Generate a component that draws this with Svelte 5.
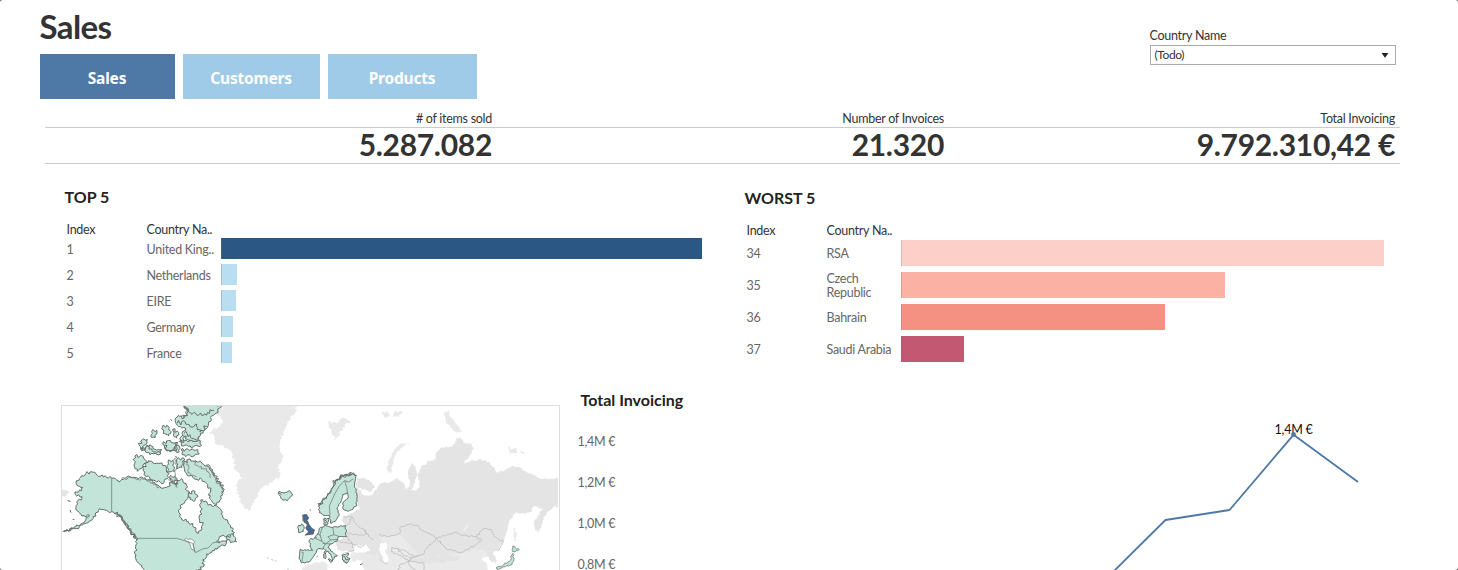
<script>
  const tabs = [
    { name: 'Sales', width: 135, active: true },
    { name: 'Customers', width: 137, active: false },
    { name: 'Products', width: 149, active: false }
  ];

  const kpis = [
    { label: '# of items sold', value: '5.287.082' },
    { label: 'Number of Invoices', value: '21.320' },
    { label: 'Total Invoicing', value: '9.792.310,42 €' }
  ];

  const rankings = [
    {
      title: 'TOP 5',
      kind: 'top',
      rows: [
        { index: 1, name: 'United King..', width: 481, color: '#2a5783' },
        { index: 2, name: 'Netherlands', width: 16.5, color: '#b9ddf1' },
        { index: 3, name: 'EIRE', width: 15.5, color: '#b9ddf1' },
        { index: 4, name: 'Germany', width: 12.5, color: '#b9ddf1' },
        { index: 5, name: 'France', width: 11.5, color: '#b9ddf1' }
      ]
    },
    {
      title: 'WORST 5',
      kind: 'worst',
      rows: [
        { index: 34, name: 'RSA', width: 483, color: '#fcd0c8' },
        { index: 35, name: 'Czech Republic', width: 324, color: '#fbb1a3' },
        { index: 36, name: 'Bahrain', width: 264, color: '#f59182' },
        { index: 37, name: 'Saudi Arabia', width: 63, color: '#c35873' }
      ]
    }
  ];

  const ticks = ['1,4M €', '1,2M €', '1,0M €', '0,8M €'];

  // Subdivides each edge with a small deterministic offset so coasts look ragged.
  function coast(text, amp = 4, closed = true, seed = 7) {
    const n = text.trim().split(/\s+/).map(Number);
    const pts = [];
    for (let i = 0; i < n.length; i += 2) pts.push([n[i], n[i + 1]]);
    let s = seed;
    const rnd = () => ((s = (s * 16807) % 2147483647) / 2147483647) * 2 - 1;
    const out = [];
    const last = closed ? pts.length : pts.length - 1;
    for (let i = 0; i < last; i++) {
      const [ax, ay] = pts[i];
      const [bx, by] = pts[(i + 1) % pts.length];
      const len = Math.hypot(bx - ax, by - ay);
      const steps = Math.max(2, Math.round(len / 5));
      out.push([ax, ay]);
      for (let k = 1; k < steps; k++) {
        const t = k / steps;
        const d = rnd() * amp;
        out.push([ax + (bx - ax) * t - ((by - ay) / len) * d, ay + (by - ay) * t + ((bx - ax) / len) * d]);
      }
    }
    if (!closed) out.push(pts[pts.length - 1]);
    return 'M' + out.map((p) => p.map((v) => v.toFixed(1)).join(' ')).join('L') + (closed ? 'Z' : '');
  }

  const america = [
    '90 216 78 220 62 232 48 248 55 258 68 262 64 272 45 276 50 288 66 290 64 300 50 306 48 322 60 340 72 347 88 345 78 358 60 374 40 385 12 394 45 386 85 368 100 355 108 338 118 326 135 330 155 335 170 342 185 355 200 375 215 398 228 415 227 440 228 465 236 490 250 515 415 515 432 492 428 480 440 462 455 458 465 446 480 440 498 432 500 420 480 428 470 424 485 408 505 404 519 402 518 384 505 370 492 355 482 328 470 318 455 318 440 305 422 300 420 318 426 342 418 356 428 375 425 390 415 400 408 384 398 370 380 364 364 354 357 338 360 318 375 304 392 290 380 272 378 250 364 236 352 240 348 255 335 248 320 262 298 258 285 248 262 240 250 235 235 236 220 232 205 228 190 238 178 246 155 235 130 231 108 222',
    '372 190 385 178 402 184 420 183 440 198 455 212 465 232 480 250 493 268 488 285 480 300 470 314 455 302 445 285 452 270 440 250 425 238 402 236 380 222 373 205',
    '385 285 400 272 414 290 402 305 390 298',
    '250 206 265 182 290 190 305 188 320 205 325 232 312 248 290 246 270 238 252 222',
    '225 168 250 170 260 184 245 205 232 214 222 195',
    '238 136 246 120 262 118 258 134 242 148', '245 152 270 134 285 148 305 148 302 162 280 162 262 158',
    '275 95 290 90 286 112 274 112', '307 82 320 76 333 95 326 108 310 100', '338 88 356 98 350 114 340 106',
    '308 132 325 122 345 130 350 150 330 156 314 146', '363 150 412 148 418 162 402 168 368 165',
    '358 125 420 120 425 136 400 140 370 138', '346 128 356 136 358 156 350 158',
    '366 14 482 14 474 38 460 46 446 72 430 94 415 118 400 124 382 118 366 100 376 84 352 76 345 60 355 46 372 54 385 30',
    '350 178 372 175 366 202 350 206', '324 186 338 180 344 214 322 218', '500 414 520 402 530 425 512 428',
    '328 232 344 228 350 242 334 246', '362 112 374 110 372 122 362 120'
  ];

  const europe = [
    '357 320 366 304 380 290 395 266 405 246 430 226 450 218 469 226 466 240 464 252 470 280 470 318 445 334 430 328 428 312 445 290 442 278 428 284 424 302 412 322 418 345 406 364 393 371 388 346 372 346 358 338',
    '235 282 240 274 252 280 268 272 279 284 262 302 246 298',
    '293 382 305 372 312 380 310 394 296 398',
    '328 420 344 414 354 402 358 385 376 376 398 382 437 377 439 410 414 412 410 424 390 432 384 442 400 458 412 466 404 470 398 480 392 462 372 446 352 448 345 462 328 486 305 489 297 476 300 449 338 451 330 438',
    '370 358 385 354 384 372 373 376', '426 466 446 460 440 470 450 476 440 490 428 480',
    '372 456 378 458 376 476 371 474', '384 478 398 480 394 487'
  ];

  const grayWest = [
    '50 14 290 14 285 40 262 66 250 100 238 140 250 172 235 200 240 228 200 256 178 276 160 300 151 334 130 320 115 290 108 254 125 232 106 210 100 175 84 146 60 136 42 128 45 110 28 97 55 80 68 60 55 42',
    '385 66 410 70 428 50 454 64 434 75 428 92 414 108 406 128 396 100',
    '298 518 316 496 350 486 380 486 384 518', '452 464 480 460 520 462 540 470 540 518 495 518 490 482 455 482'
  ];

  const eurasia = [
    '-70 235 -45 235 -25 246 -14 262 -30 276 -48 268 -66 262 -50 285 -28 286 -8 264 6 248 28 248 46 235 70 248 80 268 90 258 84 214 95 190 106 198 112 222 104 250 94 270 108 273 119 254 114 220 124 200 142 190 142 182 165 178 166 164 188 142 215 140 230 122 228 114 242 114 250 126 270 130 280 142 276 158 258 180 248 188 285 182 302 178 330 186 352 218 375 210 395 198 425 205 450 220 480 235 505 238 545 232 545 325 520 320 500 336 488 362 478 396 464 390 464 360 490 326 462 318 452 336 405 340 386 372 372 426 352 452 338 462 352 480 347 492 332 482 322 468 304 477 320 490 326 518 -40 518 -60 476 -90 452 -128 450 -136 422 -100 410 -104 376 -116 360 -96 345 -62 330 -70 300'
  ];
  const islands = [
    '192 42 204 30 210 50 222 62 238 82 246 94 228 98 214 84 198 68', '90 128 70 138 48 162 38 192 34 220 20 214 24 184 42 150 64 130',
    '384 142 396 148 410 144 412 158 390 162', '420 155 436 156 430 162', '402 382 410 402 404 436 401 412',
    '4 40 20 34 30 48 16 54', '44 36 72 34 54 50 36 50'
  ];
  const borders = [
    '-4 405 25 410 60 400 60 382 90 372 110 375 125 390 150 400 170 415 145 440 125 465 100 468 80 455 50 445 35 442 34 456',
    '170 415 200 405 228 396 248 406 290 410 306 422 280 440 240 458 200 447 170 415',
    '290 410 310 385 334 388 345 412 370 425 362 444 352 452',
    '34 456 60 466 84 480 108 486 132 490 134 512', '50 445 68 464 96 474 118 466',
    '56 512 60 494 84 486 98 468', '84 480 90 500 110 512',
    '-112 352 -84 350 -72 372 -48 390 -38 402 -60 406 -100 400', '-84 350 -94 372 -102 378',
    '-100 410 -84 430 -56 442 -44 430', '-128 424 -106 428 -84 430 -78 452 -106 458', '-48 390 -30 412 -20 420',
    '-50 470 -30 474 -18 466 0 480 22 492', '-30 474 -24 494 -40 514'
  ];
</script>

<main>
  <header>
    <div class="heading">
      <h1>Sales</h1>
      <nav>
        {#each tabs as tab}
          <button class:active={tab.active} style:width="{tab.width}px">{tab.name}</button>
        {/each}
      </nav>
    </div>
    <div class="filter">
      <span class="filter-label">Country Name</span>
      <div class="select">
        <span>(Todo)</span>
        <svg width="8" height="5" viewBox="0 0 8 5"><path d="M.5 0h7L4 4.8z" fill="#222" /></svg>
      </div>
    </div>
  </header>

  <section class="kpis">
    {#each kpis as kpi}
      <div class="kpi">
        <div class="kpi-label">{kpi.label}</div>
        <div class="kpi-value">{kpi.value}</div>
      </div>
    {/each}
  </section>

  <section class="rankings">
    {#each rankings as rank}
      <div class="ranking {rank.kind}">
        <h2>{rank.title}</h2>
        <div class="row head"><span>Index</span><span>Country Na..</span></div>
        {#each rank.rows as row}
          <div class="row">
            <span class="index">{row.index}</span>
            <span class="name">{row.name}</span>
            <div class="bar" style:width="{row.width}px" style:background={row.color}></div>
          </div>
        {/each}
      </div>
    {/each}
  </section>

  <section class="bottom">
    <div class="map">
      <svg width="496" height="164" viewBox="62 406 496 164">
        <g transform="translate(380 400) scale(.33333)">
          {#each eurasia as d}<path d={coast(d, 3)} fill="#e4e4e4" />{/each}
          <path d={coast('0 408 26 412 60 402 120 468 160 470 210 462 250 460 290 446 320 455 318 470 304 477 320 490 326 518 -40 518 10 480', 3)} fill="#eaeaea" />
          <path d={coast('60 478 110 474 150 470 210 464 245 468 230 482 180 488 130 492', 4)} fill="#e4e4e4" />
          {#each islands as d}<path d={coast(d, 3)} fill="#e9e9e9" />{/each}
          <path d={coast('0 432 18 428 22 442 14 452 24 468 26 484 12 486 6 466 -4 448', 2)} fill="#fff" />
          <path d={coast('-84 448 -70 434 -56 438 -44 430 -38 438 -28 452 -50 458 -78 458', 2)} fill="#fff" />
          <path d="M247 396Q262 388 266 369Q256 382 247 396Z" fill="#f6f6f6" />
          {#each borders as d}<path class="border" d={coast(d, 3, false)} />{/each}
          <path class="land thin" d={coast('398 438 406 444 418 448 405 456 397 454', 2)} />
          <path class="land thin" d={coast('398 460 402 474 396 494 376 500 352 510 348 504 372 494 388 484', 3)} />
        </g>
        <g transform="translate(200 400) scale(.33333)">
          {#each grayWest as d}<path d={coast(d, 5)} fill="#e9e9e9" />{/each}
          {#each europe as d}<path class="land" d={coast(d, 2.5)} />{/each}
          <path class="ragged" d={coast('358 318 366 304 380 290 395 266 405 246 430 226 450 220 468 226', 7, false)} />
          <path class="ragged" d={coast('400 250 414 238 440 222 462 224', 7, false, 19)} />
          <path class="inner" d="M390 345L388 318 404 282 418 258 434 242 446 246 460 236M434 242L440 262 443 280M344 414L366 424 376 432 368 446M366 424L360 404 368 380M376 432L392 420 384 410 402 404 398 382M402 404L418 410M392 420L412 418M368 430L392 432M304 456L310 458 306 484M352 400L362 408" />
          <path class="uk" d={coast('308 346 320 344 326 352 321 362 329 376 336 386 344 390 340 402 316 406 326 396 318 386 322 374 312 366', 1.5)} />
          <path class="ragged" d={coast('308 346 310 356 314 368 320 360', 4, false)} />
          <path class="ragged" d="M330 328L332 332M345 410l5 3M236 278l8 5M480 494l7-3M350 470l3-1M372 358l8 6-4 6M426 466l8 4 4 10 8-2M430 484l10 6" />
          <path d="M202 473l5 2M214 478l6 3M226 482l4 1M262 508l5 2" stroke="#999" stroke-width="2" fill="none" />
        </g>
        <g transform="translate(60 400) scale(.33333)">
          <path d={coast('0 268 14 270 28 278 14 290 0 290', 3)} fill="#e4e4e4" />
          {#each america as d}<path class="land" d={coast(d, 5)} />{/each}
          <path class="ragged" d={coast('165 340 182 350 196 370 212 392 228 414', 7, false)} />
          <path class="ragged" d={coast('175 345 190 366 208 390 232 420', 6, false, 23)} />
          <path class="ragged" d={coast('438 196 458 214 468 236 488 262 490 280', 7, false, 31)} />
          <path class="ragged" d={coast('372 54 385 30 372 18 392 38 425 46 442 38 462 30', 7, false)} />
          <path class="ragged" d={coast('352 70 376 66 390 80 410 72 420 96 440 80', 8, false)} />
          <path class="ragged" d={coast('372 100 390 104 402 116 418 108', 7, false, 41)} />
          <path class="ragged" d={coast('246 150 268 140 280 156 302 158', 7, false, 11)} />
          <path class="ragged" d={coast('312 136 322 150 344 140 346 154', 7, false, 13)} />
          <path class="ragged" d={coast('325 240 344 244 352 262', 7, false, 17)} />
          <path class="inner" d={coast('344 168 350 196 346 226 350 250', 6, false)} />
          <path class="inner" d={coast('378 184 386 200 384 218 410 230', 4, false)} />
          <path class="inner" d={coast('400 184 408 196 424 200 440 214 452 234', 6, false, 43)} />
          <path class="inner" d={coast('185 238 205 232 235 238 262 244 298 262', 5, false, 29)} />
          <path d={coast('374 418 390 416 404 426 400 436 404 454 394 448 388 430', 3)} fill="#fff" stroke="#68736f" stroke-width="2" />
          <path class="inner" d="M155 235V335M232 415H350L374 422 398 430 406 458 430 446 444 444 460 428 482 424" />
          <path class="ragged" d="M8 394l14-2M22 302l10 2M30 330l3 8M38 358l5 1M332 58l4 5" />
        </g>
      </svg>
    </div>
    <div class="invoicing">
      <h2>Total Invoicing</h2>
      <div class="plot">
        <div class="ticks">
          {#each ticks as tick}<span>{tick}</span>{/each}
        </div>
        <svg width="780" height="160" viewBox="620 410 780 160">
          <polyline points="1112,573 1165.5,520 1229.5,510 1293.5,434.8 1358,482" fill="none" stroke="#4e79a7" stroke-width="1.8" stroke-linejoin="round" />
          <text x="1293.5" y="433.5" text-anchor="middle">1,4M €</text>
          <circle cx="1293.5" cy="434.5" r="2.4" fill="#4e79a7" />
        </svg>
      </div>
    </div>
  </section>
</main>

<style>
  :global(body) { margin: 0; background: #777; overflow: hidden; }
  main {
    box-sizing: border-box;
    width: 1458px;
    height: 570px;
    overflow: hidden;
    background: #fff;
    border-radius: 3px;
    color: #333;
    font: 12.5px/16px Lato, sans-serif;
    letter-spacing: -.27px;
  }
  h1, h2 { margin: 0; font-weight: 700; }
  header { display: flex; justify-content: space-between; height: 99px; padding: 0 62.5px 0 39.5px; }
  h1 { height: 54px; font-size: 33px; line-height: 53px; letter-spacing: -.6px; }
  nav { display: flex; gap: 8px; }
  button {
    height: 45px;
    padding: 3px 0 0;
    border: 0;
    background: #a0cbe8;
    color: #fff;
    font: 700 15.5px/42px "Noto Sans", sans-serif;
    letter-spacing: -.2px;
  }
  button.active { background: #4e79a7; }
  .filter { width: 246px; padding-top: 27px; }
  .filter-label { display: block; height: 18px; line-height: 18px; }
  .select {
    box-sizing: border-box;
    display: flex;
    align-items: center;
    justify-content: space-between;
    height: 20px;
    padding: 0 6px 0 4px;
    border: 1px solid #aaa;
    font-size: 12px;
    letter-spacing: -.4px;
  }
  .kpis { display: grid; grid-template-columns: 452px 452px 451px; padding: 10px 0 0 45px; height: 78px; box-sizing: border-box; }
  .kpi { text-align: right; }
  .kpi-label { height: 18px; line-height: 19px; padding-right: 5px; border-bottom: 1px solid #ccc; }
  .kpi-value { height: 35px; line-height: 33px; padding-right: 5px; border-bottom: 1px solid #ccc; font-size: 30px; letter-spacing: -.3px; font-weight: 700; }
  .rankings { display: grid; grid-template-columns: 680px 680px; height: 213px; padding-left: 64.5px; box-sizing: border-box; }
  .ranking { padding-top: 10px; }
  .ranking.worst { padding-top: 11px; }
  .ranking h2, .invoicing h2 { font-size: 16px; line-height: 20px; letter-spacing: 0; color: #222; }
  .row { display: grid; grid-template-columns: 80px 74px auto; align-items: center; height: 26px; padding-left: 2px; color: #666; }
  .worst .row { height: 32px; }
  .name { padding-right: 4px; line-height: 14.5px; }
  .top .name { padding: 0; white-space: nowrap; }
  .top .name { margin-top: 3px; }
  .top .index { margin-top: 2px; }
  .worst .name, .worst .index { margin-top: 2px; }
  .ranking .head { height: 16px; margin: 14px 0 -1.5px; line-height: 17px; color: #333; white-space: nowrap; }
  .ranking.worst .head { margin-bottom: -1px; }
  .bar { box-sizing: border-box; height: 21px; border-left: 1px solid rgba(120, 120, 120, .3); }
  .worst .bar { height: 26px; }
  .bottom { display: flex; padding-left: 61px; height: 180px; }
  .map { box-sizing: border-box; width: 498.5px; height: 190px; margin-top: 15px; border: 1px solid #ddd; }
  .map svg { display: block; }
  .invoicing { padding-left: 18px; }
  .invoicing h2 { height: 20px; padding-left: 3px; }
  .plot { display: flex; }
  .ticks { display: flex; flex-direction: column; gap: 29px; width: 42px; padding-top: 26px; line-height: 12px; color: #666; white-space: nowrap; }
  .plot svg { flex: none; }
  .plot text { font: 12.5px Lato, sans-serif; fill: #111; }
  .land { fill: #c3e4d9; stroke: #5f6a66; stroke-width: 3; stroke-linejoin: round; }
  .thin { stroke-width: 2; }
  .ragged { fill: none; stroke: #666d6b; stroke-width: 3; }
  .inner { fill: none; stroke: #737e7a; stroke-width: 2.4; }
  .uk { fill: #48698f; stroke: #445569; stroke-width: 2.4; }
  .border { fill: none; stroke: #bcbcbc; stroke-width: 2.4; }
</style>
